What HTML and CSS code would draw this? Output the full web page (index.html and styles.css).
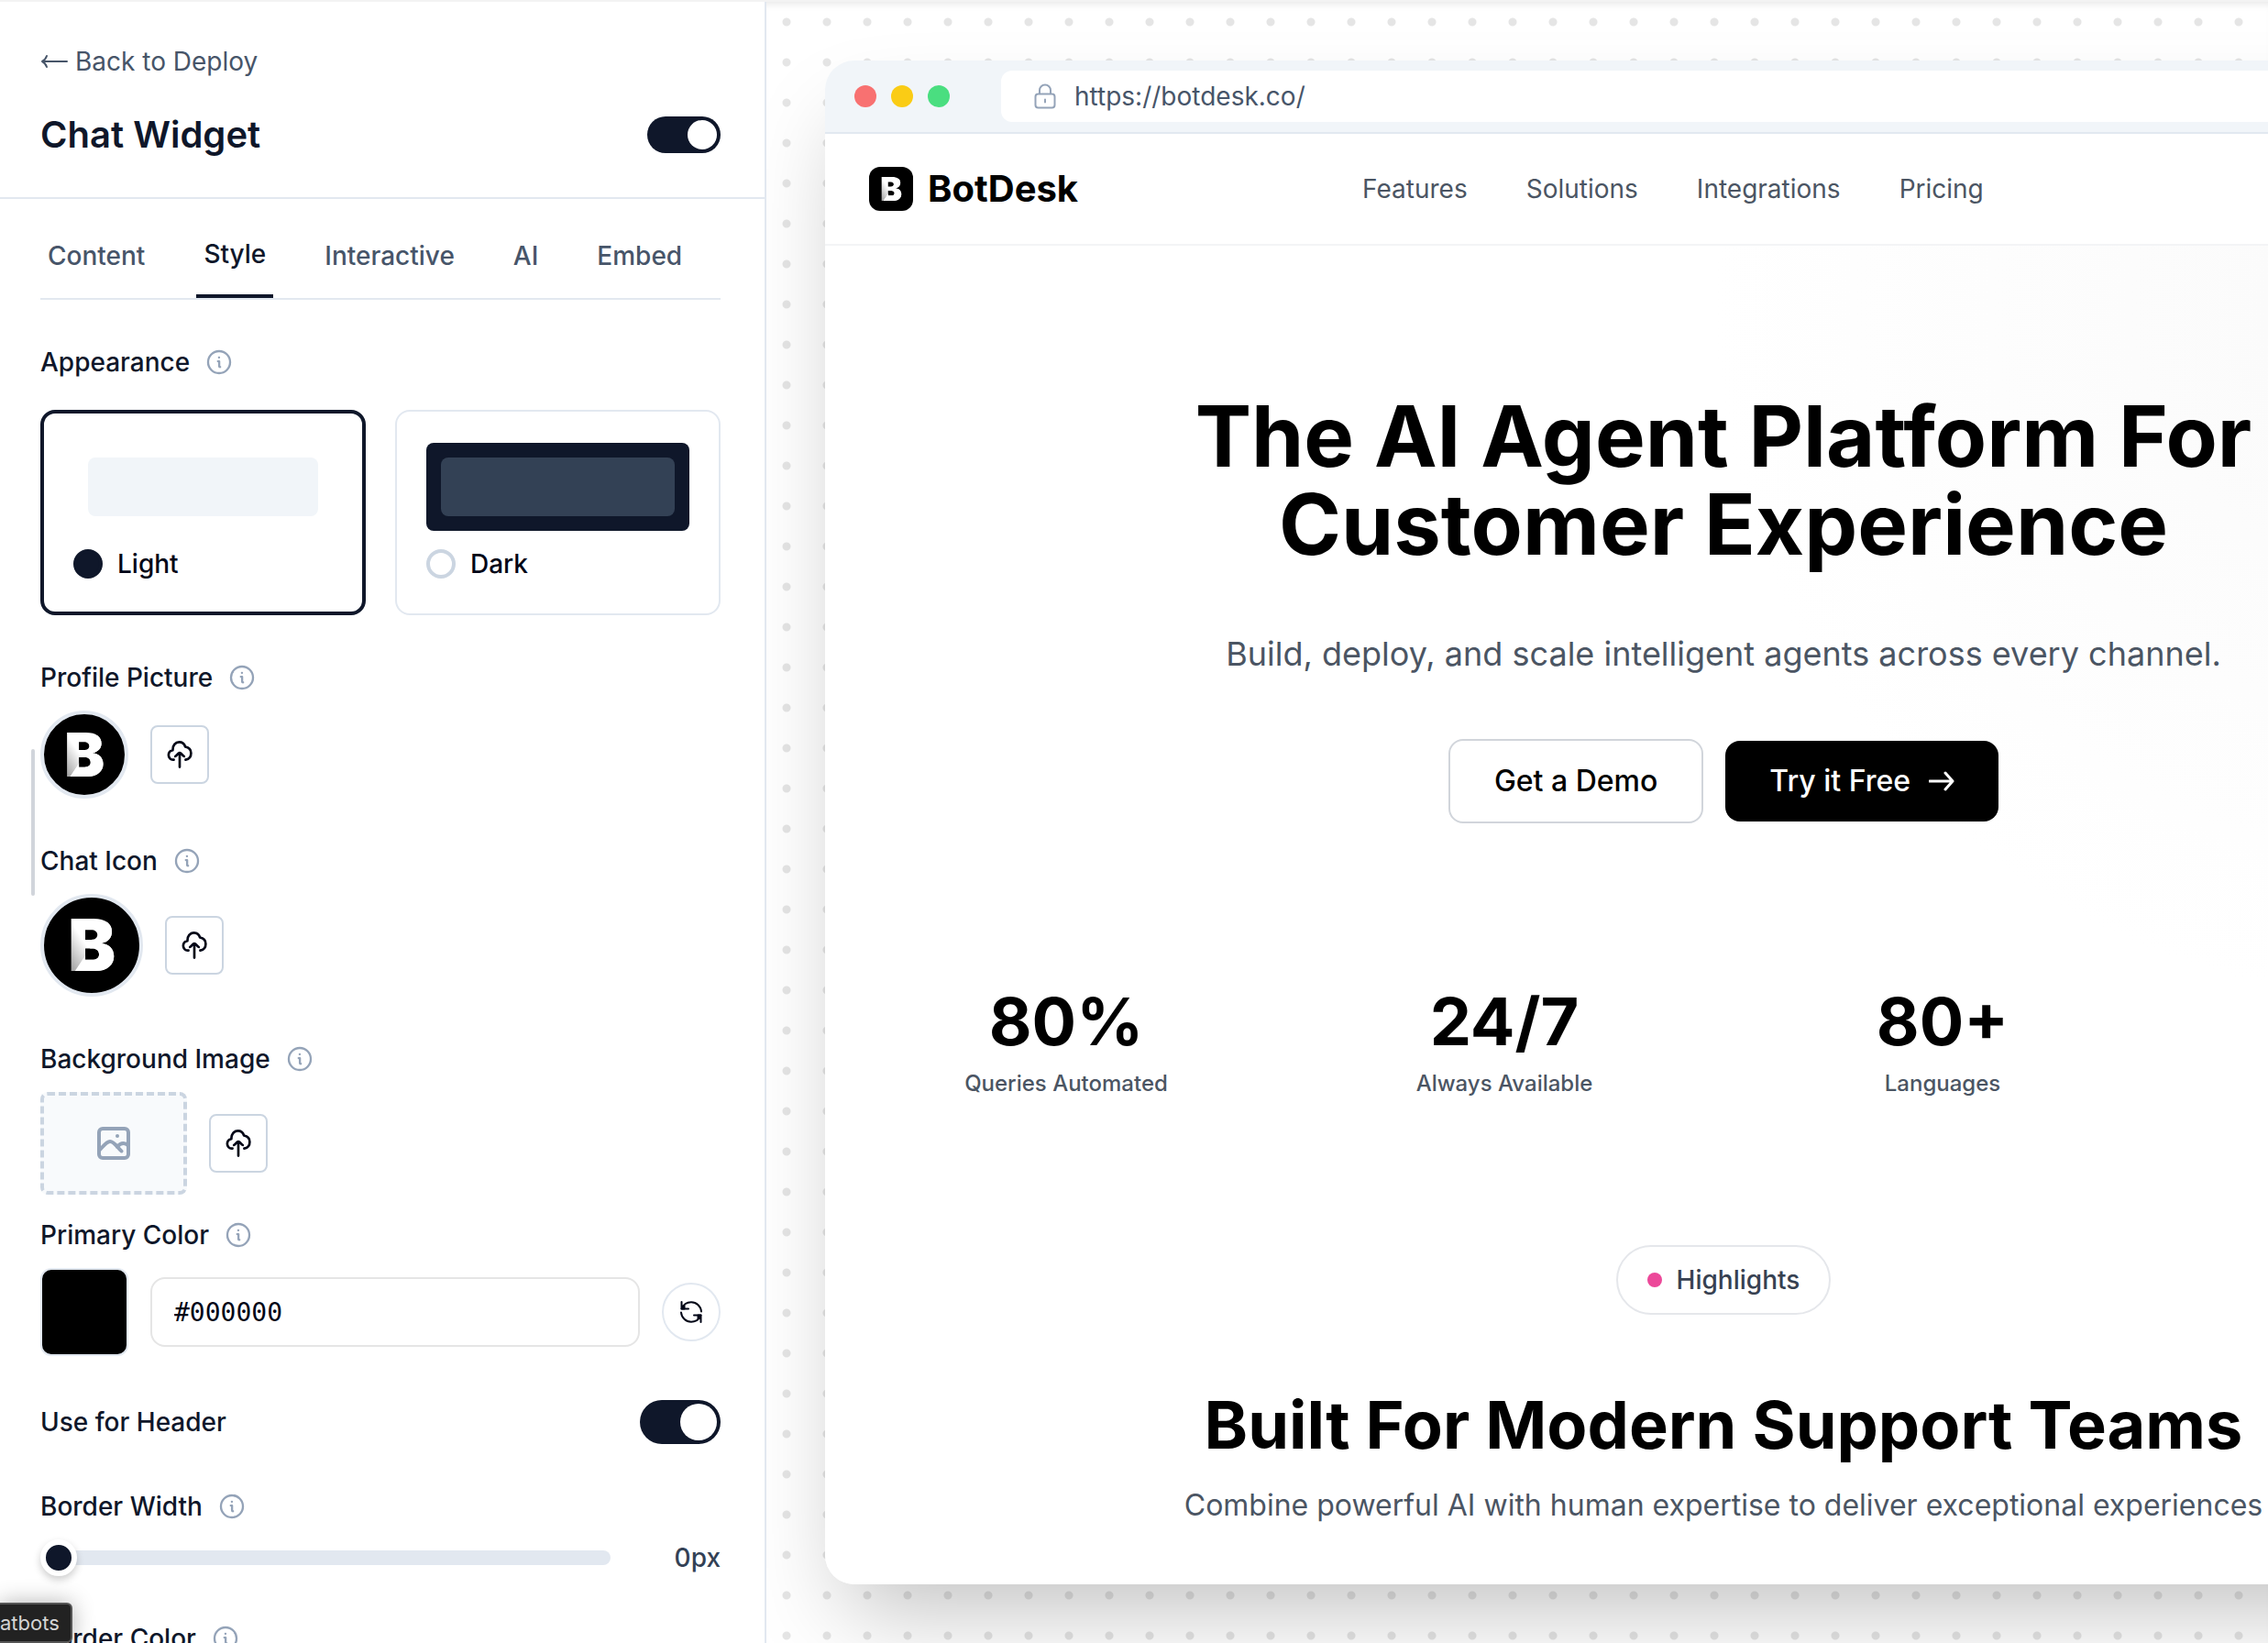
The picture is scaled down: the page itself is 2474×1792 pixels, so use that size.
FILE: index.html
```html
<!DOCTYPE html>
<html lang="en">
<head>
    <meta charset="UTF-8">
    <meta name="viewport" content="width=device-width, initial-scale=1.0">
    <title>Chat Widget</title>
    <link rel="stylesheet" href="styles.css">
</head>
<body>
    <!-- shared icons -->
    <svg class="sprite" aria-hidden="true">
        <symbol id="icon-info" viewBox="0 0 24 24">
            <circle cx="12" cy="12" r="10.3" />
            <path d="M10.9 11.2h1.2v4.6c0 .5.3.7.9.7M11.9 7.6h.1" />
        </symbol>
        <symbol id="icon-upload" viewBox="0 0 24 24">
            <path d="M7.2 16.2C4.6 16.6 2.9 14.600 2.900 12.400c0-2 1.400-3.600 3.400-4C6.100 4.600 8.500 1.800 11.600 1.800c2.400 0 4.200 1.500 5 3.800 2.700.5 4.700 2.500 4.700 5.200 0 2.600-1.700 4.800-4.500 5.400" />
            <path d="M12 10.500V22.200M8.400 13.400c1.200-.5 2.300-2.900 3.600-2.900s2.400 2.400 3.600 2.900" />
        </symbol>
    </svg>

    <main class="app">
        <aside class="sidebar">
            <header class="sidebar-header">
                <a href="#" class="back-link">
                    <svg class="back-arrow" viewBox="0 0 30 18"><path d="M29 9H2M7 3C6 6 4 8 2 9c2 1 4 3 5 6" /></svg>
                    Back to Deploy
                </a>
                <div class="row-between">
                    <h1>Chat Widget</h1>
                    <input type="checkbox" class="toggle toggle-sm" aria-label="Chat Widget" checked>
                </div>
            </header>

            <nav class="tabs">
                <button type="button">Content</button>
                <button type="button" class="active">Style</button>
                <button type="button">Interactive</button>
                <button type="button">AI</button>
                <button type="button">Embed</button>
            </nav>

            <form class="settings">
                <section class="field field-cards">
                    <h2 class="label">Appearance <svg class="info"><use href="#icon-info" /></svg></h2>
                    <div class="cards">
                        <label class="card">
                            <span class="card-preview light"><span></span></span>
                            <span class="card-option"><input type="radio" name="appearance" checked> Light</span>
                        </label>
                        <label class="card">
                            <span class="card-preview dark"><span></span></span>
                            <span class="card-option"><input type="radio" name="appearance"> Dark</span>
                        </label>
                    </div>
                </section>

                <section class="field">
                    <h2 class="label">Profile Picture <svg class="info"><use href="#icon-info" /></svg></h2>
                    <div class="row">
                        <div class="avatar"><span class="mark">B</span></div>
                        <button type="button" class="upload" aria-label="Upload profile picture"><svg><use href="#icon-upload" /></svg></button>
                    </div>
                </section>

                <section class="field">
                    <h2 class="label">Chat Icon <svg class="info"><use href="#icon-info" /></svg></h2>
                    <div class="row">
                        <div class="avatar avatar-lg"><span class="mark">B</span></div>
                        <button type="button" class="upload" aria-label="Upload chat icon"><svg><use href="#icon-upload" /></svg></button>
                    </div>
                </section>

                <section class="field">
                    <h2 class="label">Background Image <svg class="info"><use href="#icon-info" /></svg></h2>
                    <div class="row">
                        <div class="dropzone">
                            <svg viewBox="0 0 36 36">
                                <rect x="2" y="2" width="32" height="32" rx="4" />
                                <path d="M2 26c4-4 8-10 12-10 5 0 8 7 12.500 10.500M22 22c2-3 4-4 6.500-4 2 0 4 1 5.500 2.500" />
                                <circle cx="22" cy="10" r="2" class="dot" />
                            </svg>
                        </div>
                        <button type="button" class="upload" aria-label="Upload background image"><svg><use href="#icon-upload" /></svg></button>
                    </div>
                </section>

                <section class="field field-tight">
                    <label class="label" for="primary-color">Primary Color <svg class="info"><use href="#icon-info" /></svg></label>
                    <div class="row">
                        <button type="button" class="swatch" aria-label="Pick color"></button>
                        <input type="text" id="primary-color" class="color-input" value="#000000">
                        <button type="button" class="reset" aria-label="Reset color">
                            <svg viewBox="0 0 24 24">
                                <path d="M1.500 1v7.500H9M2 8.200C3.500 4 7.500 1.300 12 1.300c5.800 0 10.500 4.400 11 10.200M22.500 23v-7.500H15M22 15.800c-1.500 4.200-5.500 6.900-10 6.900-5.800 0-10.500-4.400-11-10.200" />
                                <path d="M1.500 8.500l3-3v3zM22.500 15.500l-3 3v-3z" class="solid" />
                            </svg>
                        </button>
                    </div>
                </section>

                <section class="field row-between">
                    <label class="label" for="use-header">Use for Header</label>
                    <input type="checkbox" id="use-header" class="toggle" checked>
                </section>

                <section class="field">
                    <label class="label" for="border-width">Border Width <svg class="info"><use href="#icon-info" /></svg></label>
                    <div class="row">
                        <input type="range" id="border-width" class="slider" min="0" max="10" value="0">
                        <output class="slider-value" for="border-width">0px</output>
                    </div>
                </section>

                <section class="field">
                    <h2 class="label">Border Color <svg class="info"><use href="#icon-info" /></svg></h2>
                </section>
            </form>

            <div class="scroll-thumb"></div>
        </aside>

        <section class="stage">
            <div class="browser">
                <div class="browser-bar">
                    <div class="lights">
                        <span class="red"></span>
                        <span class="yellow"></span>
                        <span class="green"></span>
                    </div>
                    <div class="address">
                        <svg viewBox="0 0 24 28">
                            <rect x="1.500" y="11.500" width="21" height="15" rx="3" />
                            <path d="M6 11V7.500a6 6 0 0 1 12 0V11M12 17.500v3" />
                        </svg>
                        https://botdesk.co/
                    </div>
                </div>

                <div class="site">
                    <header class="site-header">
                        <a href="#" class="brand"><span class="brand-logo"><span class="mark">B</span></span>BotDesk</a>
                        <nav class="site-nav">
                            <a href="#">Features</a>
                            <a href="#">Solutions</a>
                            <a href="#">Integrations</a>
                            <a href="#">Pricing</a>
                        </nav>
                    </header>

                    <section class="hero">
                        <h2>The AI Agent Platform For<br>Customer Experience</h2>
                        <p>Build, deploy, and scale intelligent agents across every channel.</p>
                        <div class="hero-actions">
                            <button type="button" class="btn btn-outline">Get a Demo</button>
                            <button type="button" class="btn btn-dark">Try it Free
                                <svg viewBox="0 0 28 22"><path d="M1 11h25M18 2l8 9-8 9" /></svg>
                            </button>
                        </div>
                    </section>

                    <section class="stats">
                        <div><strong>80%</strong><span>Queries Automated</span></div>
                        <div><strong>24/7</strong><span>Always Available</span></div>
                        <div><strong>80+</strong><span>Languages</span></div>
                    </section>

                    <section class="highlights">
                        <span class="pill"><i></i>Highlights</span>
                        <h3>Built For Modern Support Teams</h3>
                        <p>Combine powerful AI with human expertise to deliver exceptional experiences</p>
                    </section>
                </div>
            </div>
        </section>
    </main>

    <div class="tooltip">atbots</div>
</body>
</html>
```

FILE: styles.css
```css
* {
    box-sizing: border-box;
}

body {
    margin: 0;
    height: 100vh;
    overflow: hidden;
    border-top: 2px solid #f3f3f3;
    font-family: Inter, "Liberation Sans", sans-serif;
    font-size: 28px;
    line-height: 40px;
    color: #0f172a;
    background: #fff;
}

h1, h2, h3, p {
    margin: 0;
}

button, input {
    margin: 0;
    font: inherit;
    color: inherit;
}

button {
    padding: 0;
    cursor: pointer;
}

a {
    color: inherit;
    text-decoration: none;
}

svg {
    fill: none;
    stroke: currentColor;
    stroke-width: 2;
    stroke-linecap: round;
    stroke-linejoin: round;
    flex-shrink: 0;
}

.sprite {
    display: none;
}

.app {
    display: flex;
    height: 100%;
}

/* sidebar */
.sidebar {
    position: relative;
    flex: 0 0 836px;
    border-right: 2px solid #e2e8f0;
    overflow: hidden;
}

.sidebar-header {
    display: flex;
    flex-direction: column;
    gap: 32px;
    padding: 45px 48px 40px 44px;
    border-bottom: 2px solid #e2e8f0;
}

.back-link {
    display: flex;
    align-items: center;
    gap: 8px;
    color: #475569;
}

.back-arrow {
    width: 30px;
    height: 18px;
}

.row-between {
    display: flex;
    align-items: center;
    justify-content: space-between;
}

h1 {
    font-size: 40px;
    line-height: 56px;
    font-weight: 600;
}

.toggle {
    appearance: none;
    width: 88px;
    height: 48px;
    padding: 4px;
    border-radius: 24px;
    background: #cbd5e1;
    display: flex;
}

.toggle::before {
    content: "";
    height: 100%;
    aspect-ratio: 1;
    border-radius: 50%;
    background: #fff;
}

.toggle:checked {
    background: #0f172a;
    justify-content: flex-end;
}

.toggle-sm {
    width: 80px;
    height: 40px;
}

.tabs {
    display: flex;
    gap: 48px;
    margin: 16px 48px 0 44px;
    border-bottom: 2px solid #e2e8f0;
}

.tabs button {
    height: 92px;
    padding: 0 8px;
    border: 0;
    background: none;
    font-weight: 500;
    color: #475569;
}

.tabs .active {
    border-bottom: 4px solid #0f172a;
    color: #0f172a;
}

.settings {
    padding: 0 48px 0 44px;
}

.field {
    margin-top: 48px;
}

.field-tight {
    margin-top: 24px;
}

.label {
    display: flex;
    align-items: center;
    gap: 18px;
    font-size: 28px;
    line-height: 40px;
    font-weight: 500;
}

.info {
    width: 28px;
    height: 28px;
    color: #94a3b8;
}

.row {
    display: flex;
    align-items: center;
    gap: 24px;
    margin-top: 16px;
}

.cards {
    display: grid;
    grid-template-columns: 1fr 1fr;
    gap: 32px;
    margin-top: 32px;
}

.card {
    display: flex;
    flex-direction: column;
    justify-content: center;
    gap: 16px;
    padding: 32px;
    border: 2px solid #e2e8f0;
    border-radius: 16px;
    color: #020617;
    font-weight: 500;
}

.card:has(input:checked) {
    border: 4px solid #0f172a;
}

.card-preview {
    height: 96px;
    padding: 16px;
    border-radius: 8px;
}

.card-preview span {
    display: block;
    height: 64px;
    border-radius: 8px;
}

.light span {
    background: #f1f5f9;
}

.dark {
    background: #0f172a;
}

.dark span {
    background: #334155;
}

.card-option {
    display: flex;
    align-items: center;
    gap: 16px;
}

.card-option input {
    appearance: none;
    width: 32px;
    height: 32px;
    border: 4px solid #cbd5e1;
    border-radius: 50%;
}

.card-option input:checked {
    border-color: #0f172a;
    background: #0f172a;
}

.avatar {
    display: flex;
    align-items: center;
    justify-content: center;
    width: 96px;
    height: 96px;
    border: 4px solid #e2e8f0;
    border-radius: 50%;
    background: #000;
    font-size: 66px;
}

.avatar-lg {
    width: 112px;
    height: 112px;
    font-size: 78px;
}

/* B mark with a soft fold in its lower left corner */
.mark {
    font-weight: 900;
    line-height: 1;
    color: transparent;
    background:
        linear-gradient(to bottom right, transparent 50%, #fff 51%),
        linear-gradient(to top right, #999 8%, #fff 45%);
    background-clip: text;
}

.upload {
    display: flex;
    align-items: center;
    justify-content: center;
    width: 64px;
    height: 64px;
    border: 2px solid #cbd5e1;
    border-radius: 8px;
    background: #fff;
    color: #020617;
}

.upload svg {
    width: 32px;
    height: 32px;
}

.dropzone {
    display: flex;
    align-items: center;
    justify-content: center;
    width: 160px;
    height: 112px;
    border: 4px dashed #cbd5e1;
    border-radius: 8px;
    background: #f8fafc;
    color: #94a3b8;
}

.dropzone svg {
    width: 36px;
    height: 36px;
    stroke-width: 4;
}

.dropzone .dot {
    fill: currentColor;
    stroke: none;
}

.swatch {
    width: 96px;
    height: 96px;
    border: 2px solid #e2e8f0;
    border-radius: 12px;
    background: #000;
}

.color-input {
    flex: 1;
    min-width: 0;
    height: 76px;
    padding: 0 24px;
    border: 2px solid #e5e5e5;
    border-radius: 16px;
    font-family: "DejaVu Sans Mono", monospace;
    color: #020617;
}

.reset {
    display: flex;
    align-items: center;
    justify-content: center;
    width: 64px;
    height: 64px;
    border: 2px solid #e2e8f0;
    border-radius: 50%;
    background: #fff;
    color: #020617;
}

.reset svg {
    width: 24px;
    height: 24px;
    overflow: visible;
}

.solid {
    fill: currentColor;
}

.slider {
    appearance: none;
    flex: 1;
    min-width: 0;
    height: 40px;
    background: none;
}

.slider::-webkit-slider-runnable-track {
    height: 16px;
    border-radius: 8px;
    background: #e2e8f0;
}

.slider::-webkit-slider-thumb {
    appearance: none;
    width: 40px;
    height: 40px;
    margin-top: -12px;
    border: 6px solid #fff;
    border-radius: 50%;
    background: #0f172a;
    box-shadow: 0 4px 8px rgba(0, 0, 0, 0.2);
}

.slider-value {
    width: 96px;
    text-align: right;
    font-weight: 500;
    color: #334155;
}

.scroll-thumb {
    position: absolute;
    top: 815px;
    left: 34px;
    width: 4px;
    height: 160px;
    border-radius: 2px;
    background: #d1d5db;
}

/* preview */
.stage {
    flex: 1;
    display: flex;
    align-items: stretch;
    min-width: 0;
    padding: 64px 0 64px 64px;
    overflow: hidden;
    background: radial-gradient(circle, #e5e5e5 4px, transparent 5px) 0 0 / 44px 44px;
    box-shadow: inset 0 8px 8px -6px rgba(0, 0, 0, 0.1);
}

.browser {
    flex: 0 0 1960px;
    display: flex;
    flex-direction: column;
    border-radius: 32px;
    overflow: hidden;
    background: #fff;
    box-shadow: 0 50px 100px -24px rgba(0, 0, 0, 0.25);
}

.browser-bar {
    display: flex;
    align-items: center;
    gap: 56px;
    height: 80px;
    padding: 0 32px;
    border-bottom: 2px solid #e2e8f0;
    background: #f1f5f9;
}

.lights {
    display: flex;
    gap: 16px;
}

.lights span {
    width: 24px;
    height: 24px;
    border-radius: 50%;
}

.red {
    background: #f87171;
}

.yellow {
    background: #facc15;
}

.green {
    background: #4ade80;
}

.address {
    flex: 1;
    display: flex;
    align-items: center;
    gap: 20px;
    height: 56px;
    padding: 0 36px;
    border-radius: 12px;
    background: #fff;
    color: #475569;
}

.address svg {
    width: 24px;
    height: 28px;
    color: #94a3b8;
}

.site {
    flex: 1;
    background: radial-gradient(circle at 88% 12%, #fafafa, #fff 34%);
    color: #000;
}

.site-header {
    display: flex;
    align-items: center;
    gap: 310px;
    height: 122px;
    padding: 0 48px;
    border-bottom: 2px solid #f3f4f6;
    background: #fff;
}

.brand {
    display: flex;
    align-items: center;
    gap: 16px;
    font-size: 40px;
    font-weight: 700;
}

.brand-logo {
    display: flex;
    align-items: center;
    justify-content: center;
    width: 48px;
    height: 48px;
    border-radius: 12px;
    background: #000;
    font-size: 36px;
}

.site-nav {
    display: flex;
    gap: 64px;
    color: #4b5563;
}

.hero {
    display: flex;
    flex-direction: column;
    align-items: center;
    padding-top: 160px;
    text-align: center;
}

.hero h2 {
    font-size: 92px;
    line-height: 96px;
    font-weight: 700;
}

.hero p {
    margin-top: 64px;
    font-size: 36px;
    line-height: 58px;
    color: #4b5563;
}

.hero-actions {
    display: flex;
    align-items: center;
    gap: 24px;
    margin-top: 64px;
}

.btn {
    display: flex;
    align-items: center;
    gap: 20px;
    height: 88px;
    padding: 0 48px;
    border: 0;
    border-radius: 16px;
    font-size: 32px;
    font-weight: 500;
}

.btn-outline {
    height: 92px;
    border: 2px solid #d1d5db;
    background: #fff;
}

.btn-dark {
    background: #000;
    color: #fff;
}

.btn svg {
    width: 28px;
    height: 22px;
    stroke-width: 3;
}

.stats {
    display: grid;
    grid-template-columns: repeat(4, 1fr);
    gap: 48px;
    padding: 176px 48px 0;
    text-align: center;
}

.stats strong {
    display: block;
    font-size: 72px;
    line-height: 80px;
    font-weight: 700;
}

.stats span {
    display: block;
    margin-top: 8px;
    font-size: 24px;
    font-weight: 500;
    color: #4b5563;
}

.highlights {
    display: flex;
    flex-direction: column;
    align-items: center;
    padding-top: 156px;
    text-align: center;
}

.pill {
    display: flex;
    align-items: center;
    gap: 16px;
    height: 76px;
    padding: 0 32px;
    border: 2px solid #e5e7eb;
    border-radius: 38px;
    font-weight: 500;
    color: #374151;
}

.pill i {
    width: 16px;
    height: 16px;
    border-radius: 50%;
    background: #ec4899;
}

.highlights h3 {
    margin-top: 80px;
    font-size: 72px;
    line-height: 80px;
    font-weight: 700;
}

.highlights p {
    margin-top: 24px;
    font-size: 32px;
    line-height: 48px;
    color: #4b5563;
}

/* status tooltip cut off by the window edge */
.tooltip {
    position: absolute;
    left: 0;
    bottom: 0;
    padding: 0 12px 0 0;
    border: 2px solid #555;
    border-left: 0;
    border-radius: 0 6px 6px 0;
    background: #222;
    color: #d4d4d4;
    font-size: 22px;
    box-shadow: 0 0 24px rgba(0, 0, 0, 0.3);
}
```
